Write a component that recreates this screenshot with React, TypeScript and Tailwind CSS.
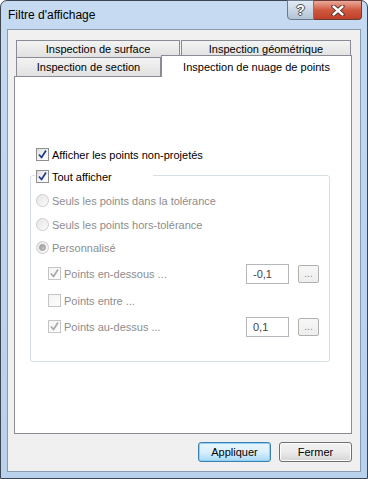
import React from "react";

function CheckBox({ checked, disabled }: { checked?: boolean; disabled?: boolean }) {
  return (
    <div
      className={
        "w-[13px] h-[13px] shrink-0 border flex items-center justify-center " +
        (disabled
          ? "border-[#c5c5c5] bg-gradient-to-br from-[#f4f4f4] to-[#fdfdfd]"
          : "border-[#8e8f8f] bg-gradient-to-br from-[#dcdcdc] via-[#f4f4f4] to-[#ffffff]")
      }
    >
      {checked && (
        <svg width="11" height="11" viewBox="0 0 11 11">
          <path
            d="M2 5.5 L4.5 8.5 L9 1.5"
            fill="none"
            stroke={disabled ? "#a8a8a8" : "#21398a"}
            strokeWidth="1.7"
            strokeLinejoin="round"
          />
        </svg>
      )}
    </div>
  );
}

function Radio({ selected }: { selected?: boolean }) {
  return (
    <div className="w-[13px] h-[13px] shrink-0 rounded-full border border-[#cdcdcd] bg-gradient-to-br from-[#e6e6e6] to-[#fafafa] flex items-center justify-center">
      {selected && <div className="w-[7px] h-[7px] rounded-full bg-gradient-to-br from-[#a0a0a0] to-[#c8c8c8] border border-[#9a9a9a]" />}
    </div>
  );
}

function Tab({ w, label, h }: { w: string; label: string; h: string }) {
  return (
    <div
      className={
        w +
        " " +
        h +
        " border-t border-l border-r border-[#898c95] bg-gradient-to-b from-[#f3f3f3] to-[#e1e1e1] flex items-center justify-center text-[11px] text-black leading-none"
      }
    >
      {label}
    </div>
  );
}

export default function App() {
  return (
    <div className="w-[368px] h-[479px] font-['Liberation_Sans',sans-serif] bg-white">
      <div className="w-[368px] h-[479px] rounded-t-[7px] border border-[#3d4650] bg-gradient-to-b from-[#c6dbf2] via-[#bcd4ee] to-[#b9d1eb] flex flex-col">
        {/* title bar */}
        <div className="h-[28px] flex items-start relative">
          <div className="pl-[7px] pt-[7px] text-[12px] text-black leading-[14px]">Filtre d'affichage</div>
          <div className="ml-auto mr-[5px] flex -mt-[1px]">
            <div className="w-[27px] h-[20px] border border-[#6b7a8c] rounded-bl-[4px] bg-gradient-to-b from-[#e3ebf4] via-[#c9d6e4] to-[#b2c3d7] flex items-center justify-center">
              <span className="text-[14px] font-bold text-white leading-none [text-shadow:0_0_1px_#333,1px_0_0_#555,-1px_0_0_#555,0_1px_0_#555,0_-1px_0_#555]">?</span>
            </div>
            <div className="w-[48px] h-[20px] border border-l-0 border-[#6b3a34] rounded-br-[4px] bg-gradient-to-b from-[#e9a99a] via-[#d0583f] to-[#c0402a] flex items-center justify-center">
              <svg width="14" height="11" viewBox="0 0 14 11">
                <path d="M2.5 1.5 L11.5 9.5 M11.5 1.5 L2.5 9.5" stroke="#4a2420" strokeWidth="4.2" strokeLinecap="round" />
                <path d="M2.5 1.5 L11.5 9.5 M11.5 1.5 L2.5 9.5" stroke="#ffffff" strokeWidth="2.4" strokeLinecap="round" />
              </svg>
            </div>
          </div>
        </div>
        {/* client area */}
        <div className="ml-[6px] w-[354px] h-[443px] border border-[#8a9bb0] bg-[#f0f0f0] flex flex-col">
          <div className="ml-[6px] mt-[10px] flex flex-col">
            {/* tab row 1 */}
            <div className="flex ml-[2px] gap-[1px] h-[17px]">
              <Tab w="w-[164px]" h="h-[17px]" label="Inspection de surface" />
              <Tab w="w-[170px]" h="h-[17px]" label="Inspection géométrique" />
            </div>
            {/* tab row 2 */}
            <div className="flex items-end h-[19px] relative z-10">
              <div className="ml-[2px]">
                <Tab w="w-[145px]" h="h-[19px]" label="Inspection de section" />
              </div>
              <div className="w-[191px] h-[22px] -mb-[1px] border-t border-l border-r border-[#898c95] bg-white flex items-start justify-center pt-[4px] text-[11px] text-black leading-[14px]">
                Inspection de nuage de points
              </div>
            </div>
            {/* panel */}
            <div className="w-[338px] h-[358px] border border-[#898c95] bg-white flex flex-col text-[11px] leading-[14px]">
              <div className="ml-[21px] mt-[71px] flex items-center h-[13px] gap-[3px] text-black">
                <CheckBox checked />
                <span>Afficher les points non-projetés</span>
              </div>
              {/* group box */}
              <div className="ml-[15px] mt-[14px] w-[300px] h-[187px] border border-[#d5dfe5] rounded-[3px] flex flex-col">
                <div className="-mt-[6px] ml-[4px] w-[118px] h-[13px] bg-white pl-[1px] flex items-center gap-[3px] text-black">
                  <CheckBox checked />
                  <span>Tout afficher</span>
                </div>
                <div className="ml-[5px] mt-[11px] flex items-center h-[13px] gap-[3px] text-[#8d8d8d]">
                  <Radio />
                  <span>Seuls les points dans la tolérance</span>
                </div>
                <div className="ml-[5px] mt-[11px] flex items-center h-[13px] gap-[3px] text-[#8d8d8d]">
                  <Radio />
                  <span>Seuls les points hors-tolérance</span>
                </div>
                <div className="ml-[5px] mt-[10px] flex items-center h-[13px] gap-[3px] text-[#8d8d8d]">
                  <Radio selected />
                  <span>Personnalisé</span>
                </div>
                <div className="ml-[17px] mr-[10px] mt-[13px] flex items-center h-[13px] gap-[3px] text-[#8d8d8d]">
                  <CheckBox checked disabled />
                  <span className="flex-1">Points en-dessous ...</span>
                  <div className="w-[43px] h-[20px] shrink-0 border border-[#b5b7bc] bg-white flex items-center pl-[6px] text-[#444]">-0,1</div>
                  <div className="ml-[6px] w-[21px] h-[18px] shrink-0 border border-[#b0b0b0] rounded-[2px] bg-gradient-to-b from-[#f7f7f7] to-[#eeeeee] flex items-center justify-center text-[#8a8a8a] text-[10px] leading-none">...</div>
                </div>
                <div className="ml-[17px] mt-[14px] flex items-center h-[13px] gap-[3px] text-[#8d8d8d]">
                  <CheckBox disabled />
                  <span>Points entre ...</span>
                </div>
                <div className="ml-[17px] mr-[10px] mt-[13px] flex items-center h-[13px] gap-[3px] text-[#8d8d8d]">
                  <CheckBox checked disabled />
                  <span className="flex-1">Points au-dessus ...</span>
                  <div className="w-[43px] h-[20px] shrink-0 border border-[#b5b7bc] bg-white flex items-center pl-[6px] text-[#444]">0,1</div>
                  <div className="ml-[6px] w-[21px] h-[18px] shrink-0 border border-[#b0b0b0] rounded-[2px] bg-gradient-to-b from-[#f7f7f7] to-[#eeeeee] flex items-center justify-center text-[#8a8a8a] text-[10px] leading-none">...</div>
                </div>
              </div>
            </div>
            {/* buttons */}
            <div className="w-[338px] mt-[8px] flex justify-end gap-[8px] text-[11px] text-black">
              <div className="w-[73px] h-[20px] rounded-[3px] border border-[#3c7fb1] bg-gradient-to-b from-[#eaf6fd] via-[#d9f0fc] to-[#a7d9f5] flex items-center justify-center shadow-[inset_0_0_0_1px_#8fd0f5]">
                Appliquer
              </div>
              <div className="w-[73px] h-[20px] rounded-[3px] border border-[#707070] bg-gradient-to-b from-[#f2f2f2] via-[#ebebeb] to-[#d5d5d5] flex items-center justify-center shadow-[inset_0_0_0_1px_#fcfcfc]">
                Fermer
              </div>
            </div>
          </div>
        </div>
      </div>
    </div>
  );
}
